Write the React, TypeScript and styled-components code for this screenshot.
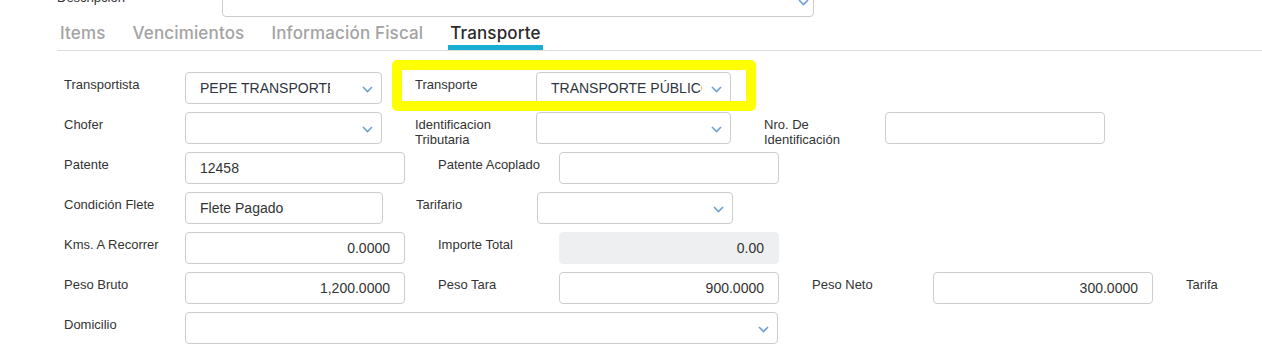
import React from 'react';
import styled, { createGlobalStyle } from 'styled-components';

const GlobalStyle = createGlobalStyle`
  html, body {
    margin: 0;
    padding: 0;
    background: #ffffff;
    overflow: hidden;
  }
  body {
    font-family: 'Liberation Sans', Arial, sans-serif;
    color: #333333;
  }
`;

const Page = styled.div`
  width: 1262px;
  height: 345px;
  overflow: hidden;
`;

const DescRow = styled.div`
  display: flex;
  margin-top: -15px;
  padding-left: 57px;
`;

const DescLabel = styled.div`
  width: 165px;
  padding-top: 5px;
  font-size: 13px;
  line-height: 15px;
  color: #333;
`;

const DescBox = styled.div`
  width: 592px;
  height: 32px;
  box-sizing: border-box;
  border: 1px solid #cccccc;
  border-radius: 4px;
  display: flex;
  align-items: center;
  justify-content: flex-end;
  padding-right: 4px;
`;

const TabBar = styled.div`
  display: flex;
  align-items: flex-end;
  gap: 23px;
  margin-left: 57px;
  padding-left: 1px;
  height: 33px;
  border-bottom: 1px solid #dddddd;
`;

const Tab = styled.div<{ $active?: boolean }>`
  font-family: Inter, 'Open Sans', sans-serif;
  font-size: 17px;
  font-weight: 500;
  line-height: 20px;
  padding: 6px 2px 2px;
  border-bottom: 5px solid ${({ $active }) => ($active ? '#1aaed2' : 'transparent')};
  color: ${({ $active }) => ($active ? '#2b2b2b' : '#a3a3a3')};
  letter-spacing: 0.15px;
`;

const Form = styled.div`
  display: flex;
  flex-direction: column;
  gap: 8px;
  padding-top: 21px;
`;

const Row = styled.div`
  display: flex;
  align-items: flex-start;
  height: 32px;
  padding-left: 64px;
`;

const Field = styled.div<{ $highlight?: boolean }>`
  display: flex;
  align-items: flex-start;
  margin-right: 33px;
  position: relative;

  ${({ $highlight }) =>
    $highlight &&
    `
    &::after {
      content: '';
      position: absolute;
      left: -23px;
      right: -25px;
      top: -12px;
      bottom: -7px;
      border: 10px solid #ffff00;
      border-radius: 5px;
      pointer-events: none;
    }
  `}
`;

const Label = styled.div`
  width: 121px;
  flex-shrink: 0;
  padding-top: 5px;
  font-size: 13px;
  line-height: 15px;
  color: #333;
`;

const Input = styled.div<{ $width: number; $align?: 'left' | 'right'; $readOnly?: boolean }>`
  width: ${({ $width }) => $width}px;
  height: 32px;
  box-sizing: border-box;
  border: 1px solid ${({ $readOnly }) => ($readOnly ? '#eeeff1' : '#cccccc')};
  background: ${({ $readOnly }) => ($readOnly ? '#eeeff1' : '#ffffff')};
  border-radius: 4px;
  padding: 0 14px;
  display: flex;
  align-items: center;
  justify-content: ${({ $align }) => ($align === 'right' ? 'flex-end' : 'flex-start')};
  font-size: 14px;
  color: #333;
  white-space: nowrap;
`;

const Select = styled.div<{ $width: number }>`
  width: ${({ $width }) => $width}px;
  height: 32px;
  box-sizing: border-box;
  border: 1px solid #cccccc;
  border-radius: 4px;
  padding: 0 8px 0 14px;
  display: flex;
  align-items: center;
  font-size: 14px;
  color: #2f3640;
`;

const SelectValue = styled.span<{ $clip: number }>`
  width: ${({ $clip }) => $clip}px;
  overflow: hidden;
  white-space: nowrap;
`;

const Spacer = styled.span`
  flex: 1;
`;

const ChevronWrap = styled.span`
  display: flex;
  margin-top: 3px;
`;

const Chevron = () => (
  <ChevronWrap>
    <svg width="11" height="7" viewBox="0 0 11 7">
      <polyline points="1,1 5.5,5.5 10,1" fill="none" stroke="#6c9fd6" strokeWidth="1.6" />
    </svg>
  </ChevronWrap>
);

const SelectBox: React.FC<{ width: number; value?: string; clip?: number }> = ({ width, value, clip = 0 }) => (
  <Select $width={width}>
    {value && <SelectValue $clip={clip}>{value}</SelectValue>}
    <Spacer />
    <Chevron />
  </Select>
);

export default function App() {
  return (
    <Page>
      <GlobalStyle />
      <DescRow>
        <DescLabel>Descripción</DescLabel>
        <DescBox>
          <Chevron />
        </DescBox>
      </DescRow>

      <TabBar>
        <Tab>Items</Tab>
        <Tab>Vencimientos</Tab>
        <Tab>Información Fiscal</Tab>
        <Tab $active>Transporte</Tab>
      </TabBar>

      <Form>
        <Row>
          <Field>
            <Label>Transportista</Label>
            <SelectBox width={197} value="PEPE TRANSPORTE" clip={130} />
          </Field>
          <Field $highlight>
            <Label>Transporte</Label>
            <SelectBox width={195} value="TRANSPORTE PÚBLICO" clip={151} />
          </Field>
        </Row>

        <Row>
          <Field>
            <Label>Chofer</Label>
            <SelectBox width={197} />
          </Field>
          <Field>
            <Label>Identificacion Tributaria</Label>
            <SelectBox width={195} />
          </Field>
          <Field>
            <Label>Nro. De Identificación</Label>
            <Input $width={220} />
          </Field>
        </Row>

        <Row>
          <Field>
            <Label>Patente</Label>
            <Input $width={220}>12458</Input>
          </Field>
          <Field>
            <Label>Patente Acoplado</Label>
            <Input $width={220} />
          </Field>
        </Row>

        <Row>
          <Field>
            <Label>Condición Flete</Label>
            <Input $width={198}>Flete Pagado</Input>
          </Field>
          <Field>
            <Label>Tarifario</Label>
            <SelectBox width={196} />
          </Field>
        </Row>

        <Row>
          <Field>
            <Label>Kms. A Recorrer</Label>
            <Input $width={220} $align="right">0.0000</Input>
          </Field>
          <Field>
            <Label>Importe Total</Label>
            <Input $width={220} $align="right" $readOnly>0.00</Input>
          </Field>
        </Row>

        <Row>
          <Field>
            <Label>Peso Bruto</Label>
            <Input $width={220} $align="right">1,200.0000</Input>
          </Field>
          <Field>
            <Label>Peso Tara</Label>
            <Input $width={220} $align="right">900.0000</Input>
          </Field>
          <Field>
            <Label>Peso Neto</Label>
            <Input $width={220} $align="right">300.0000</Input>
          </Field>
          <Field>
            <Label>Tarifa</Label>
          </Field>
        </Row>

        <Row>
          <Field>
            <Label>Domicilio</Label>
            <SelectBox width={593} />
          </Field>
        </Row>
      </Form>
    </Page>
  );
}
